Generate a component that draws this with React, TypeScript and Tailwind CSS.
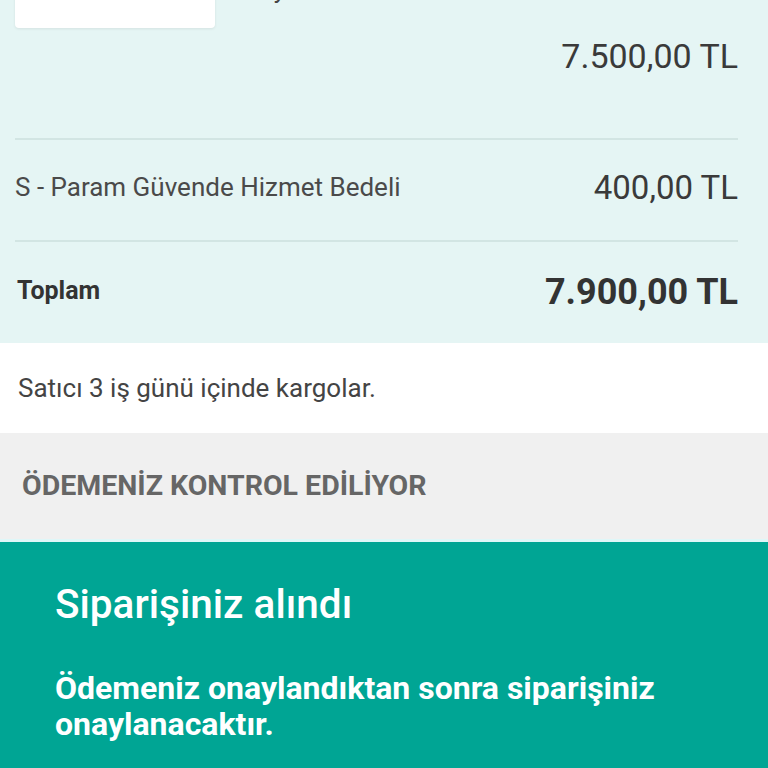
import React from 'react';

const Divider: React.FC = () => <div className="h-[2px] bg-[#d2e5e3]" />;

const App: React.FC = () => {
    return (
        <div className="min-h-[768px] overflow-hidden bg-white font-['Roboto',sans-serif]">
            <div className="bg-[#e5f5f4] pb-[1px] pl-[15px] pr-[30px]">
                <div className="-mt-[92px] flex gap-[30px]">
                    <div className="h-[120px] w-[200px] rounded-[4px] bg-white shadow-[0_1px_3px_rgba(0,0,0,0.08)]" />
                    <div className="pt-[69px] text-[25px] leading-none text-[#444]">Beyaz</div>
                </div>
                <div className="mt-[11px] text-right text-[34px] leading-none text-[#3a3a3a]">7.500,00 TL</div>
                <div className="mt-[65px]">
                    <Divider />
                </div>
                <div className="flex h-[100px] items-center justify-between pb-[6px]">
                    <span className="text-[26px] leading-none text-[#4a4a4a]">S - Param Güvende Hizmet Bedeli</span>
                    <span className="text-[33px] leading-none text-[#3a3a3a]">400,00 TL</span>
                </div>
                <Divider />
                <div className="flex h-[100px] items-center justify-between">
                    <span className="ml-[2px] mb-[4px] text-[25px] font-bold leading-none text-[#333]">Toplam</span>
                    <span className="text-[36px] font-bold leading-none text-[#333]">7.900,00 TL</span>
                </div>
            </div>
            <div className="flex h-[90px] items-center px-[18px]">
                <span className="text-[26px] leading-none text-[#444]">Satıcı 3 iş günü içinde kargolar.</span>
            </div>
            <div className="flex h-[109px] items-center border-b-[3px] border-[#dff7f8] bg-[#f0f0f0] px-[22px]">
                <span className="text-[28.5px] font-bold leading-none text-[#666]">ÖDEMENİZ KONTROL EDİLİYOR</span>
            </div>
            <div className="bg-[#00a594] px-[55px] pt-[42px] pb-[40px] text-white">
                <h1 className="text-[40.5px] font-medium leading-none">Siparişiniz alındı</h1>
                <p className="mt-[45px] text-[32px] font-bold leading-[36px]">
                    Ödemeniz onaylandıktan sonra siparişiniz onaylanacaktır.
                </p>
            </div>
        </div>
    );
};

export default App;
